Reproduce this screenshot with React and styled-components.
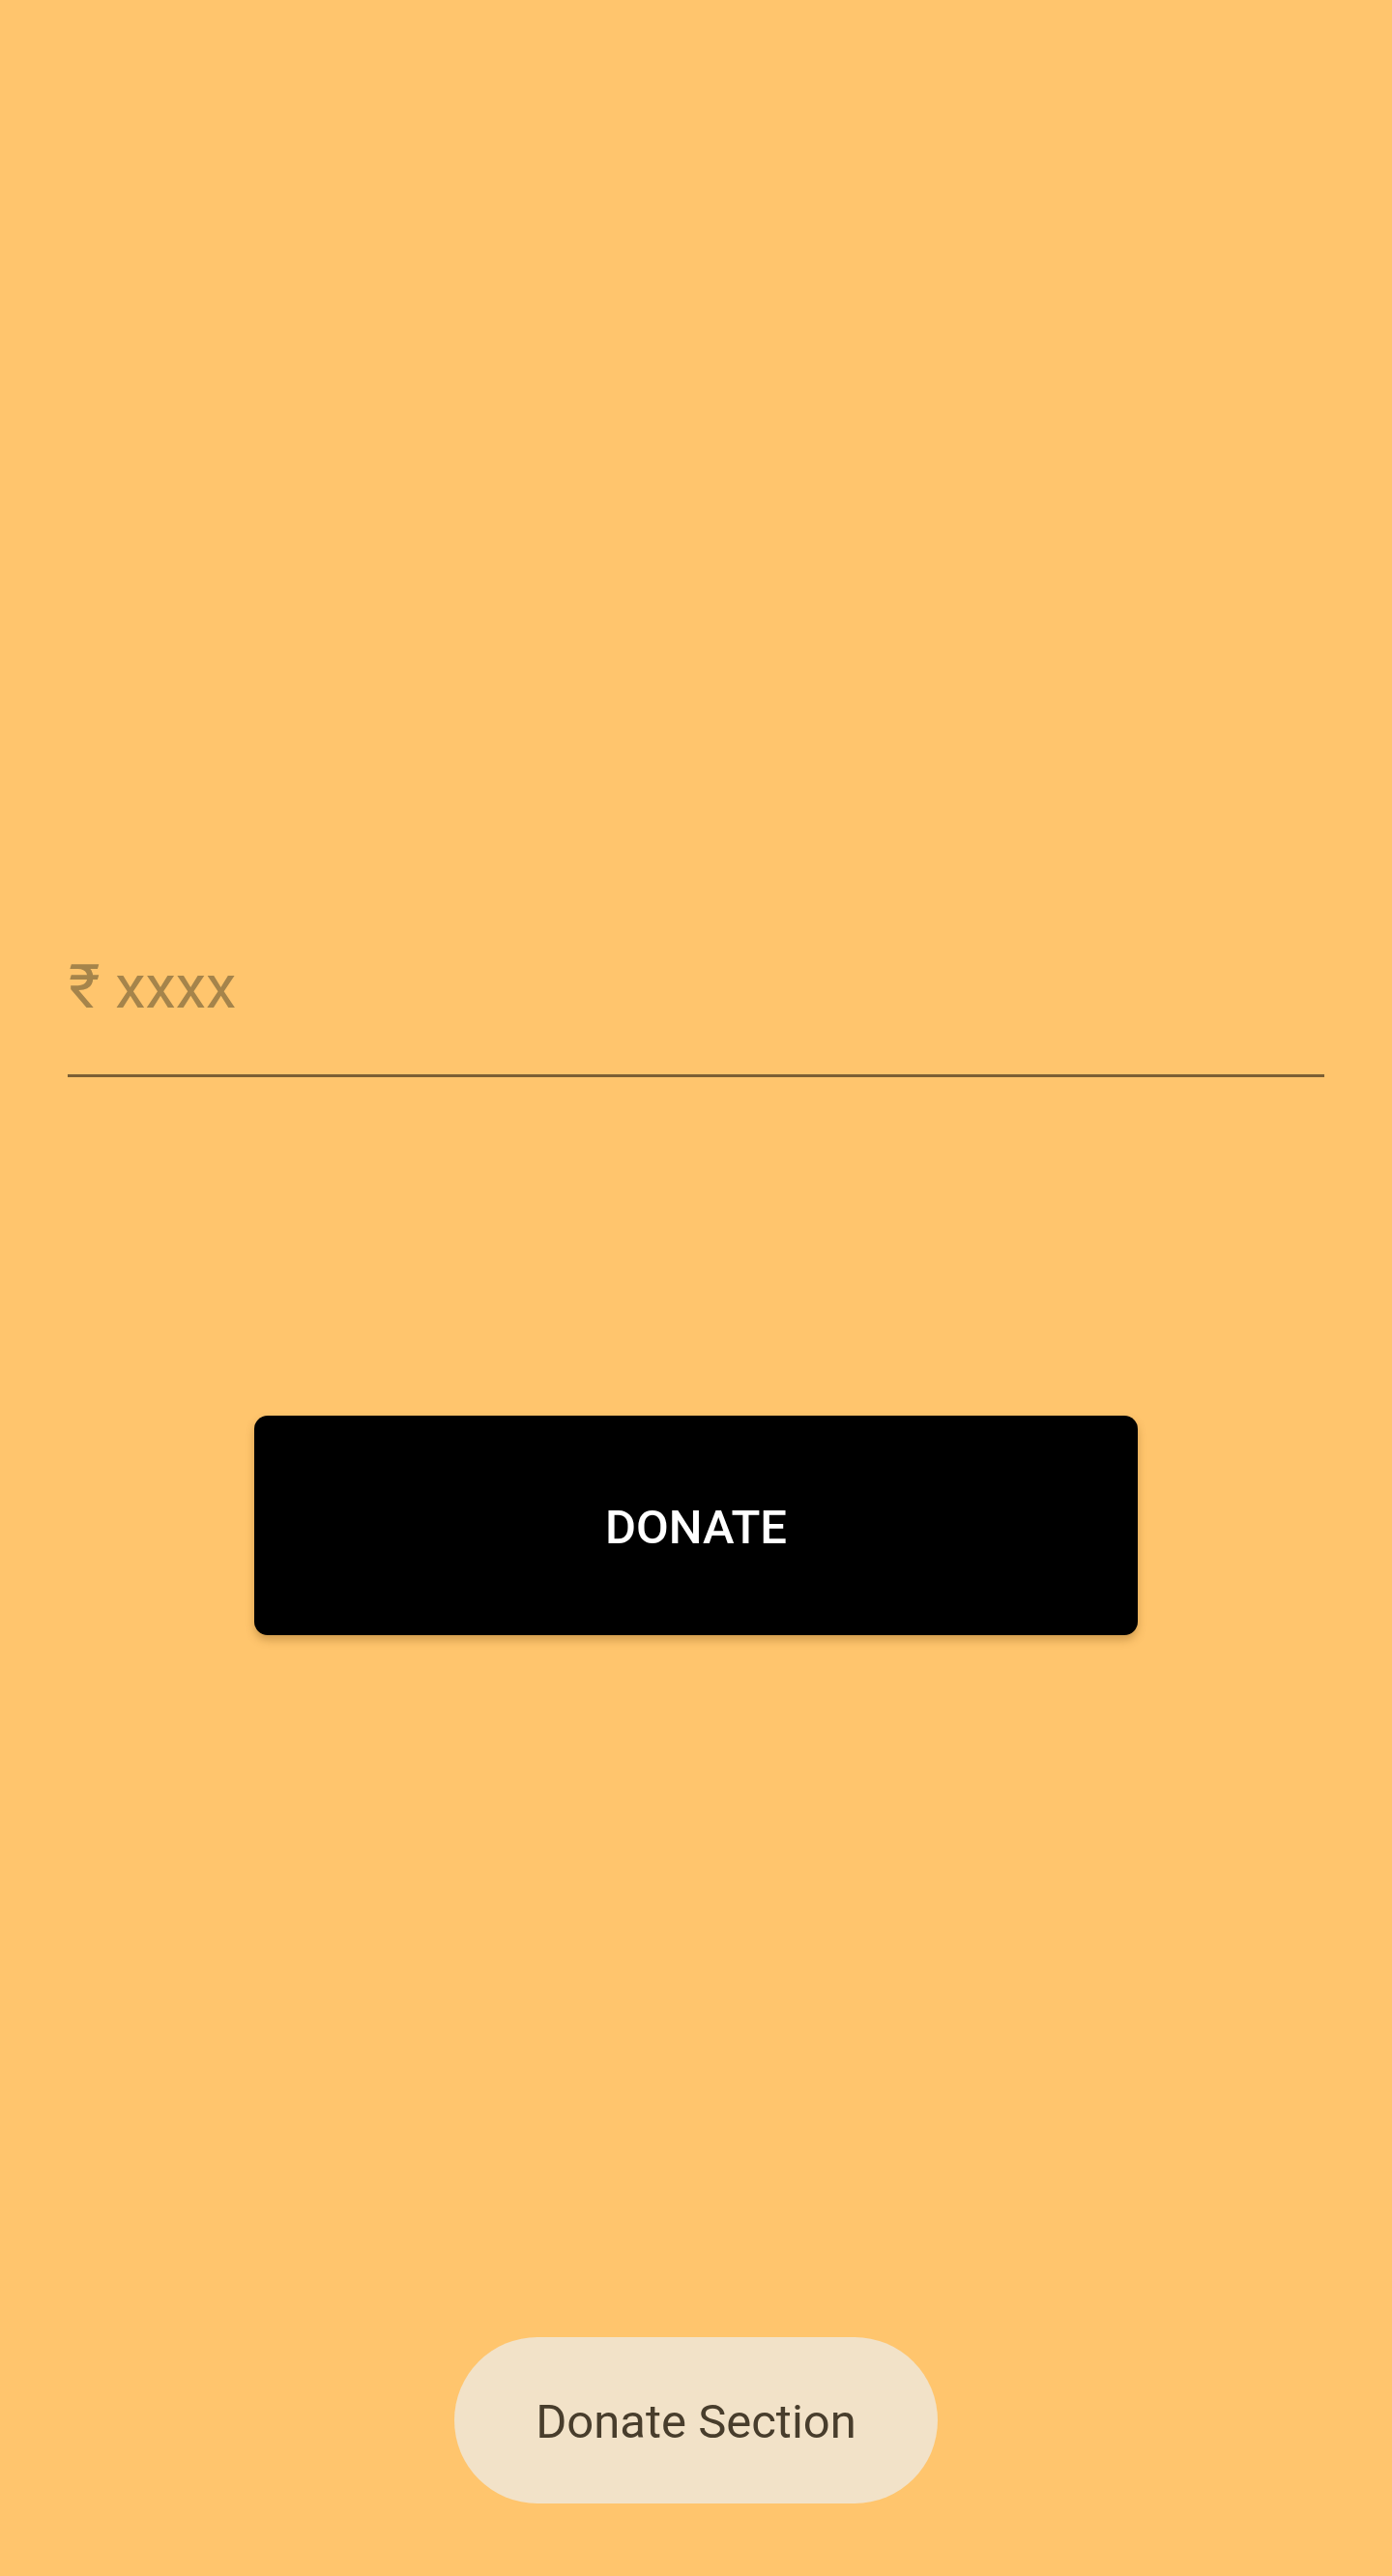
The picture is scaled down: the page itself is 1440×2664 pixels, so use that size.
import React from 'react'
import styled, { createGlobalStyle } from 'styled-components';

const GlobalStyle = createGlobalStyle`
  html, body {
    margin: 0;
    padding: 0;
    background: #ffc56d;
  }
  * { box-sizing: border-box; }
`;

function App() {
  return <Screen>
    <GlobalStyle />
    <Field>
      <AmountInput type="text" placeholder="₹ xxxx" />
    </Field>
    <ButtonRow>
      <DonateButton>DONATE</DonateButton>
    </ButtonRow>
    <Toast>Donate Section</Toast>
  </Screen>
}

const Screen = styled.div`
  min-height: 2664px;
  display: flex;
  flex-direction: column;
  align-items: stretch;
  padding: 984px 70px 75px;
  font-family: Roboto, "Liberation Sans", sans-serif;
`;

const Field = styled.div`
  display: flex;
  padding-bottom: 53px;
  border-bottom: 3.5px solid #7b5f34;
`;

const AmountInput = styled.input`
  flex: 1;
  border: none;
  outline: none;
  background: transparent;
  padding: 0 0 0 1px;
  margin: 0;
  height: 74px;
  font-family: Roboto, "DejaVu Sans", sans-serif;
  font-size: 63px;
  line-height: 74px;
  color: #3a2c14;

  &::placeholder {
    color: #a5844b;
  }
`;

const ButtonRow = styled.div`
  display: flex;
  justify-content: center;
  margin-top: 350px;
`;

const DonateButton = styled.button`
  width: 914px;
  height: 227px;
  padding: 4px 0 0;
  border: none;
  border-radius: 14px;
  background: #000;
  color: #fff;
  font-family: Roboto, "Liberation Sans", sans-serif;
  font-weight: 500;
  font-size: 49px;
  letter-spacing: 0;
  box-shadow: 0 5px 9px rgba(120, 80, 20, 0.35);
  cursor: pointer;
`;

const Toast = styled.div`
  margin-top: auto;
  align-self: center;
  width: 500px;
  height: 172px;
  padding-top: 3px;
  border-radius: 86px;
  background: #f2e2c8;
  color: #483d2c;
  font-size: 49px;
  display: flex;
  align-items: center;
  justify-content: center;
`;

export default App;
